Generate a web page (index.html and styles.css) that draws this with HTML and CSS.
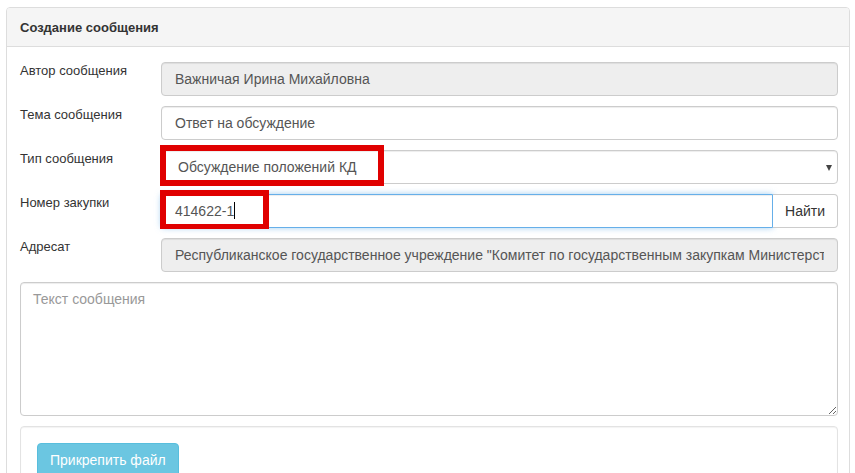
FILE: index.html
```html
<!DOCTYPE html>
<html lang="ru">
<head>
    <meta charset="UTF-8">
    <meta name="viewport" content="width=device-width, initial-scale=1.0">
    <title>Создание сообщения</title>
    <link rel="stylesheet" href="styles.css">
</head>
<body>
    <div class="panel">
        <div class="panel-heading">Создание сообщения</div>
        <div class="panel-body">
            <div class="form-row">
                <label class="form-label">Автор сообщения</label>
                <div class="form-field">
                    <input class="form-control" type="text" value="Важничая Ирина Михайловна" disabled>
                </div>
            </div>
            <div class="form-row">
                <label class="form-label">Тема сообщения</label>
                <div class="form-field">
                    <input class="form-control" type="text" value="Ответ на обсуждение">
                </div>
            </div>
            <div class="form-row">
                <label class="form-label">Тип сообщения</label>
                <div class="form-field">
                    <div class="form-control select">Обсуждение положений КД</div>
                    <div class="mark mark-type"></div>
                </div>
            </div>
            <div class="form-row">
                <label class="form-label">Номер закупки</label>
                <div class="form-field group">
                    <div class="form-control focus">414622-1<span class="caret"></span></div>
                    <button class="btn-find">Найти</button>
                    <div class="mark mark-num"></div>
                </div>
            </div>
            <div class="form-row">
                <label class="form-label">Адресат</label>
                <div class="form-field">
                    <input class="form-control" type="text" value="Республиканское государственное учреждение &quot;Комитет по государственным закупкам Министерства финансов&quot;" disabled>
                </div>
            </div>
            <textarea class="message" placeholder="Текст сообщения"></textarea>
            <div class="well">
                <button class="btn-attach">Прикрепить файл</button>
            </div>
        </div>
    </div>
</body>
</html>
```

FILE: styles.css
```css
* {
    box-sizing: border-box;
}
body {
    margin: 0;
    font-family: "Liberation Sans", Arial, sans-serif;
    font-size: 14px;
    color: #333;
    background: #fff;
    height: 473px;
    overflow: hidden;
}
.panel {
    margin: 7px 5px 0 6px;
    border: 1px solid #ddd;
    border-radius: 4px;
    height: 500px;/*панель продолжается ниже края*/
}
.panel-heading {
    height: 39px;
    display: flex;
    align-items: center;
    padding: 0 13px;
    background: #f5f5f5;
    border-bottom: 1px solid #ddd;
    border-radius: 3px 3px 0 0;
    font-size: 13px;
    font-weight: bold;
}
.panel-body {
    padding: 15px 11px 0 13px;
}
.form-row {
    display: flex;
    margin-bottom: 10px;
}
.form-label {
    width: 141px;
    font-size: 13px;
    line-height: 18px;
    color: #333;
}
.form-field {
    flex: 1;
    position: relative;/*красные рамки поверх*/
    display: flex;
}
.form-control {
    width: 100%;
    height: 34px;
    padding: 6px 13px;
    border: 1px solid #ccc;
    border-radius: 4px;
    background: #fff;
    color: #555;
    font-family: inherit;
    font-size: 14px;
    line-height: 20px;
    box-shadow: inset 0 1px 1px rgba(0, 0, 0, .075);
    white-space: nowrap;
    overflow: hidden;
}
.form-control:disabled {
    background: #eee;
    color: #555;
    -webkit-text-fill-color: #555;
    opacity: 1;
}
.select {
    position: relative;
    padding-left: 16px;
}
.select::after {
    content: "";
    position: absolute;
    right: 5px;
    top: 14px;
    border-left: 3px solid transparent;
    border-right: 3px solid transparent;
    border-top: 6px solid #444;
}
.group .form-control {
    flex: 1;
    border-radius: 4px 0 0 4px;
    border-color: #66afe9;
    box-shadow: inset 0 1px 1px rgba(0, 0, 0, .075), 0 0 6px rgba(102, 175, 233, .6);
}
.caret {
    display: inline-block;
    width: 1px;
    height: 17px;
    background: #000;
    vertical-align: -3px;
}
.btn-find {
    width: 65px;
    height: 34px;
    border: 1px solid #ccc;
    border-left: none;
    border-radius: 0 4px 4px 0;
    background: #fff;
    color: #333;
    font-family: inherit;
    font-size: 14px;
}
.mark {
    position: absolute;
    border: 6px solid #e00000;
}
.mark-type {
    left: -1px;
    top: -5px;
    width: 224px;
    height: 41px;
}
.mark-num {
    left: -1px;
    top: -4px;
    width: 109px;
    height: 39px;
    border-width: 6px 6px 5px 6px;
}
.message {
    display: block;
    width: 100%;
    height: 134px;
    padding: 6px 12px;
    border: 1px solid #ccc;
    border-radius: 4px;
    font-family: inherit;
    font-size: 14px;
    line-height: 20px;
    color: #555;
    box-shadow: inset 0 1px 1px rgba(0, 0, 0, .075);
}
.message::placeholder {
    color: #999;
}
.well {
    margin-top: 10px;
    padding: 16px;
    border: 1px solid #e3e3e3;
    border-radius: 4px;
    box-shadow: inset 0 1px 1px rgba(0, 0, 0, .05);
    height: 80px;
}
.btn-attach {
    height: 34px;
    padding: 6px 12px;
    border: 1px solid #46b8da;
    border-radius: 4px;
    background: #5bc0de;
    color: #fff;
    font-family: inherit;
    font-size: 14px;
    opacity: .9;
}
```
